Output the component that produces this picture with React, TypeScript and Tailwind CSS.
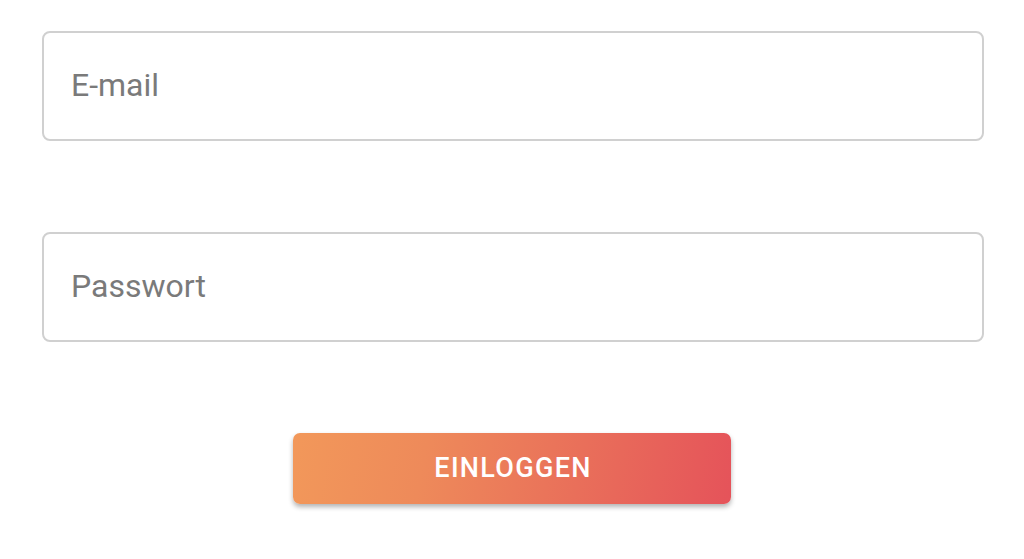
export default function App() {
  return (
    <div className="min-h-[559px] w-[1024px] bg-white font-['Roboto',sans-serif]">
      <div className="flex flex-col pl-[42px] pr-[40px] pt-[31px]">
        <input
          type="email"
          placeholder="E-mail"
          className="h-[110px] w-full rounded-[8px] border-2 border-[#d0d0d0] bg-white px-[27px] pb-[2px] text-[32px] text-[#333] placeholder:text-[#7a7a7a] outline-none"
        />
        <input
          type="password"
          placeholder="Passwort"
          className="mt-[91px] h-[110px] w-full rounded-[8px] border-2 border-[#d0d0d0] bg-white px-[27px] pb-[2px] text-[32px] text-[#333] placeholder:text-[#7a7a7a] outline-none"
        />
        <div className="mt-[91px] flex justify-center pr-[2px]">
          <button className="h-[71px] w-[438px] rounded-[7px] bg-[linear-gradient(100deg,#f2985a_0%,#ee8a5a_30%,#e96f5a_65%,#e5535a_100%)] pl-[2px] text-[27px] font-medium tracking-[1.3px] text-white shadow-[0_3px_5px_rgba(0,0,0,0.3)]">
            EINLOGGEN
          </button>
        </div>
      </div>
    </div>
  )
}
